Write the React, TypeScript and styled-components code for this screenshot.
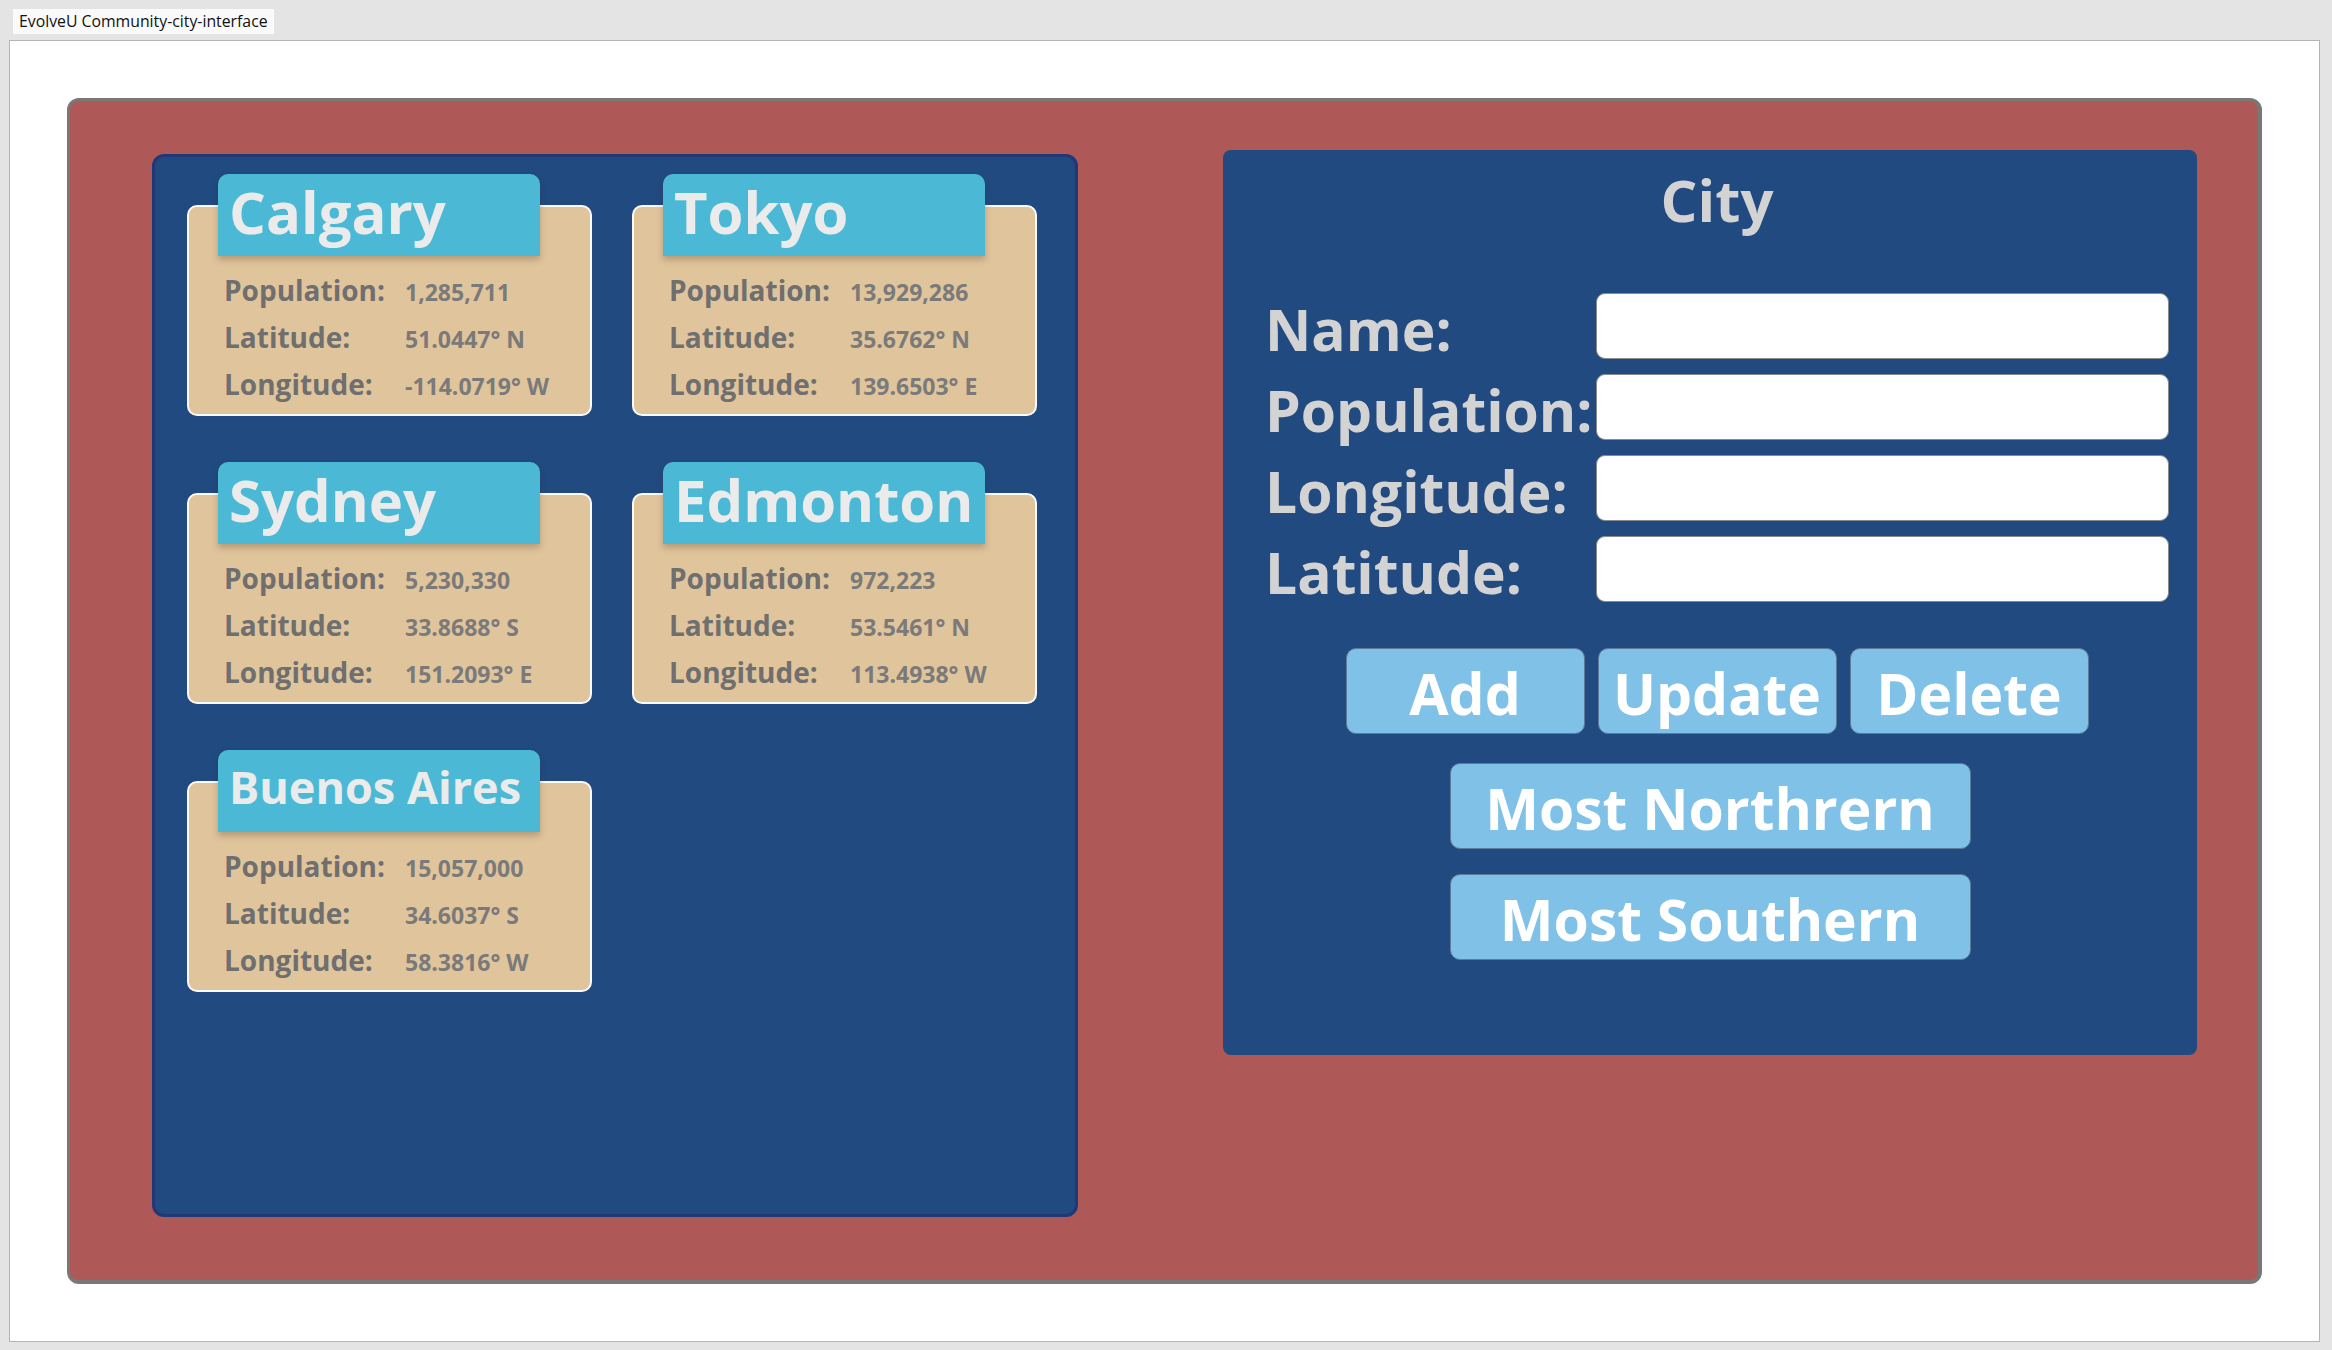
import React from "react";
import styled, { createGlobalStyle } from "styled-components";

const GlobalStyle = createGlobalStyle`
  html, body {
    margin: 0;
    padding: 0;
    background: #e4e4e4;
  }
  * {
    box-sizing: border-box;
  }
`;

type City = {
  name: string;
  population: string;
  latitude: string;
  longitude: string;
};

const cities: City[] = [
  { name: "Calgary", population: "1,285,711", latitude: "51.0447° N", longitude: "-114.0719° W" },
  { name: "Tokyo", population: "13,929,286", latitude: "35.6762° N", longitude: "139.6503° E" },
  { name: "Sydney", population: "5,230,330", latitude: "33.8688° S", longitude: "151.2093° E" },
  { name: "Edmonton", population: "972,223", latitude: "53.5461° N", longitude: "113.4938° W" },
  { name: "Buenos Aires", population: "15,057,000", latitude: "34.6037° S", longitude: "58.3816° W" },
];

function CityCard({ city }: { city: City }) {
  // long names get a smaller title so they stay inside the tab
  const compact = city.name.length > 10;
  return (
    <CardWrap>
      <CardTab $compact={compact}>{city.name}</CardTab>
      <CardBody>
        <InfoRow>
          <InfoLabel>Population:</InfoLabel>
          <InfoValue>{city.population}</InfoValue>
        </InfoRow>
        <InfoRow>
          <InfoLabel>Latitude:</InfoLabel>
          <InfoValue>{city.latitude}</InfoValue>
        </InfoRow>
        <InfoRow>
          <InfoLabel>Longitude:</InfoLabel>
          <InfoValue>{city.longitude}</InfoValue>
        </InfoRow>
      </CardBody>
    </CardWrap>
  );
}

export default function App() {
  return (
    <>
      <GlobalStyle />
      <Window>
        <TabBar>
          <Tab>EvolveU Community-city-interface</Tab>
        </TabBar>
        <Content>
          <Board>
            <CityList>
              {cities.map((c) => (
                <CityCard key={c.name} city={c} />
              ))}
            </CityList>
            <FormPanel>
              <FormTitle>City</FormTitle>
              <FormGrid>
                <FieldLabel>Name:</FieldLabel>
                <Field />
                <FieldLabel>Population:</FieldLabel>
                <Field />
                <FieldLabel>Longitude:</FieldLabel>
                <Field />
                <FieldLabel>Latitude:</FieldLabel>
                <Field />
              </FormGrid>
              <ButtonRow>
                <ActionButton $w={239}>Add</ActionButton>
                <ActionButton $w={239}>Update</ActionButton>
                <ActionButton $w={239}>Delete</ActionButton>
              </ButtonRow>
              <ButtonStack>
                <ActionButton $w={521}>Most Northrern</ActionButton>
                <ActionButton $w={521}>Most Southern</ActionButton>
              </ButtonStack>
            </FormPanel>
          </Board>
        </Content>
      </Window>
    </>
  );
}

const Window = styled.div`
  display: flex;
  flex-direction: column;
  width: 2332px;
  height: 1350px;
  padding: 0 12px 8px 9px;
  font-family: "Open Sans", "Liberation Sans", sans-serif;
`;

const TabBar = styled.div`
  display: flex;
  height: 40px;
  padding: 9px 0 0 4px;
`;

const Tab = styled.div`
  height: 25px;
  padding: 0 6px;
  background: #fafafa;
  color: #111;
  font-size: 15.8px;
  line-height: 25px;
  white-space: nowrap;
`;

const Content = styled.div`
  flex: 1;
  display: flex;
  background: #fff;
  border: 1px solid #b4b4b4;
  padding: 57px;
`;

const Board = styled.div`
  flex: 1;
  display: flex;
  align-items: flex-start;
  gap: 145px;
  background: #ae5857;
  border: 3px solid #787878;
  border-right-width: 4px;
  border-bottom-width: 4px;
  border-radius: 12px;
  padding: 53px 0 0 82px;
`;

const CityList = styled.div`
  display: grid;
  grid-template-columns: 405px 405px;
  grid-auto-rows: max-content;
  column-gap: 40px;
  row-gap: 46px;
  align-content: start;
  width: 926px;
  height: 1063px;
  padding: 17px 0 0 32px;
  background: #214a80;
  border: 3px solid #1f3877;
  border-radius: 12px;
`;

const CardWrap = styled.div`
  display: flex;
  flex-direction: column;
`;

const CardTab = styled.div<{ $compact?: boolean }>`
  position: relative;
  z-index: 1;
  width: 322px;
  height: 82px;
  margin: 0 0 -51px 31px;
  padding-left: 11px;
  background: #4bb9d6;
  border-radius: 10px 10px 0 0;
  box-shadow: 0 4px 6px rgba(60, 40, 20, 0.25);
  color: #ebebeb;
  font-size: ${(p) => (p.$compact ? "45px" : "58px")};
  font-weight: 700;
  line-height: ${(p) => (p.$compact ? "74px" : "76px")};
  white-space: nowrap;
`;

const CardBody = styled.div`
  height: 211px;
  padding: 60px 0 0 35px;
  background: #e0c49c;
  border: 2px solid #fafafa;
  border-radius: 10px;
`;

const InfoRow = styled.div`
  display: grid;
  grid-template-columns: 181px auto;
  align-items: baseline;
  height: 47px;
`;

const InfoLabel = styled.span`
  color: #6f6f6f;
  font-size: 28px;
  font-weight: 700;
  line-height: 47px;
`;

const InfoValue = styled.span`
  color: #7a7a7a;
  font-size: 23px;
  font-weight: 700;
  line-height: 47px;
`;

const FormPanel = styled.div`
  display: flex;
  flex-direction: column;
  align-items: center;
  width: 974px;
  height: 905px;
  margin-top: -4px;
  padding-top: 10px;
  background: #214a80;
  border-radius: 8px;
`;

const FormTitle = styled.h1`
  margin: 0;
  color: #d3d3d3;
  font-size: 58px;
  font-weight: 700;
  line-height: 80px;
  padding-left: 14px;
`;

const FormGrid = styled.div`
  display: grid;
  grid-template-columns: 331px 573px;
  grid-auto-rows: 66px;
  row-gap: 15px;
  align-items: center;
  align-self: flex-start;
  margin: 53px 0 0 42px;
`;

const FieldLabel = styled.label`
  color: #d3d3d3;
  font-size: 57px;
  font-weight: 700;
  line-height: 66px;
  padding-top: 6px;
  white-space: nowrap;
`;

const Field = styled.input.attrs({ type: "text" })`
  width: 573px;
  height: 66px;
  background: #fff;
  border: 1px solid #8a8a8a;
  border-radius: 9px;
  outline: none;
`;

const ButtonRow = styled.div`
  display: flex;
  gap: 13px;
  margin: 46px 0 0 14px;
`;

const ButtonStack = styled.div`
  display: flex;
  flex-direction: column;
  gap: 25px;
  margin-top: 29px;
`;

const ActionButton = styled.button<{ $w: number }>`
  width: ${(p) => p.$w}px;
  height: 86px;
  padding: 4px 0 0;
  background: #7fc1e7;
  border: 1px solid #5d7c9c;
  border-radius: 10px;
  color: #fff;
  font-family: "Open Sans", "Liberation Sans", sans-serif;
  font-size: 57px;
  font-weight: 700;
  line-height: 80px;
  white-space: nowrap;
`;
